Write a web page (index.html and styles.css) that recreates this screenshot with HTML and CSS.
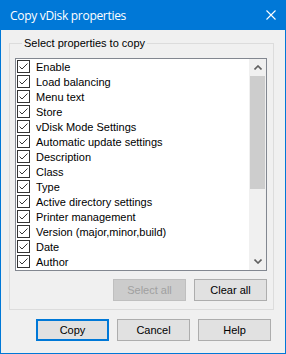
FILE: index.html
```html
<!DOCTYPE html>
<html lang="en">
<head>
  <meta charset="UTF-8">
  <title>Copy vDisk properties</title>
  <link rel="stylesheet" href="styles.css">
</head>
<body>
  <div class="window">
    <div class="titlebar">
      <span class="title">Copy vDisk properties</span>
      <svg class="close" width="10" height="10" viewBox="0 0 10 10">
        <path d="M0.5 0.5 L9.5 9.5 M9.5 0.5 L0.5 9.5" stroke="#fff" stroke-width="1.1"/>
      </svg>
    </div>

    <fieldset class="group">
      <legend>Select properties to copy</legend>
      <div class="listbox">
        <ul class="items">
          <li><span class="check"></span>Enable</li>
          <li><span class="check"></span>Load balancing</li>
          <li><span class="check"></span>Menu text</li>
          <li><span class="check"></span>Store</li>
          <li><span class="check"></span>vDisk Mode Settings</li>
          <li><span class="check"></span>Automatic update settings</li>
          <li><span class="check"></span>Description</li>
          <li><span class="check"></span>Class</li>
          <li><span class="check"></span>Type</li>
          <li><span class="check"></span>Active directory settings</li>
          <li><span class="check"></span>Printer management</li>
          <li><span class="check"></span>Version (major,minor,build)</li>
          <li><span class="check"></span>Date</li>
          <li><span class="check"></span>Author</li>
        </ul>
        <div class="scrollbar">
          <div class="arrow">
            <svg width="8" height="5" viewBox="0 0 8 5"><path d="M0.5 4.5 L4 1 L7.5 4.5" fill="none" stroke="#606060" stroke-width="1.6"/></svg>
          </div>
          <div class="thumb"></div>
          <div class="track"></div>
          <div class="arrow">
            <svg width="8" height="5" viewBox="0 0 8 5"><path d="M0.5 0.5 L4 4 L7.5 0.5" fill="none" stroke="#606060" stroke-width="1.6"/></svg>
          </div>
        </div>
      </div>
      <div class="row">
        <button class="btn" disabled>Select all</button>
        <button class="btn">Clear all</button>
      </div>
    </fieldset>

    <div class="row footer">
      <button class="btn default">Copy</button>
      <button class="btn">Cancel</button>
      <button class="btn">Help</button>
    </div>
  </div>
</body>
</html>
```

FILE: styles.css
```css
* {
  margin: 0;
  padding: 0;
  box-sizing: border-box;
}

body {
  background: #f0f0f0;
  font-family: "Liberation Sans", Arial, sans-serif;
  font-size: 11px;
  color: #000;
}

.window {
  width: 286px;
  height: 354px;
  background: #f0f0f0;
  border: 1px solid #0078d7;
  border-top: 0;
}

.titlebar {
  height: 30px;
  margin: 0 -1px;
  background: #0078d7;
  color: #fff;
  display: flex;
  align-items: center;
  justify-content: space-between;
  padding: 0 10px 0 10px;
}

.titlebar .title {
  font-family: "Open Sans", "Noto Sans", sans-serif;
  font-size: 12px;
  letter-spacing: -0.3px;
}

.titlebar .close {
  margin-top: -1px;
}

.group {
  margin: 7px 0 0 8px;
  width: 265px;
  border: 1px solid #dcdcdc;
  padding: 8px 6px 8px 5px;
}

.group legend {
  margin-left: 7px;
  padding: 0 2px;
  line-height: 13px;
}

.listbox {
  height: 213px;
  border: 1px solid #828790;
  background: #fff;
  display: flex;
}

.items {
  flex: 1;
  list-style: none;
}

.items li {
  height: 15px;
  display: flex;
  align-items: center;
  gap: 6px;
  padding-left: 1px;
  white-space: nowrap;
}

.check {
  width: 13px;
  height: 13px;
  border: 1px solid #333;
  background: #fff url("data:image/svg+xml,%3Csvg xmlns='http://www.w3.org/2000/svg' width='11' height='11'%3E%3Cpath d='M1.5 5.5 L4 8 L9.5 2.5' fill='none' stroke='%23333' stroke-width='1'/%3E%3C/svg%3E") no-repeat center;
}

.scrollbar {
  width: 17px;
  background: #f0f0f0;
  display: flex;
  flex-direction: column;
}

.scrollbar .arrow {
  height: 17px;
  display: flex;
  align-items: center;
  justify-content: center;
}

.scrollbar .thumb {
  height: 113px;
  margin: 0 1px;
  background: #cdcdcd;
}

.scrollbar .track {
  flex: 1;
}

.row {
  display: flex;
  justify-content: flex-end;
  gap: 8px;
  margin-top: 8px;
}

.btn {
  width: 73px;
  height: 22px;
  background: #e1e1e1;
  border: 1px solid #adadad;
  font-family: "Liberation Sans", Arial, sans-serif;
  font-size: 11px;
  color: #000;
}

.btn:disabled {
  background: #cccccc;
  border-color: #bfbfbf;
  color: #a0a0a0;
}

.btn.default {
  border: 2px solid #0078d7;
}

.footer {
  margin-top: 9px;
  padding-right: 14px;
}
```
